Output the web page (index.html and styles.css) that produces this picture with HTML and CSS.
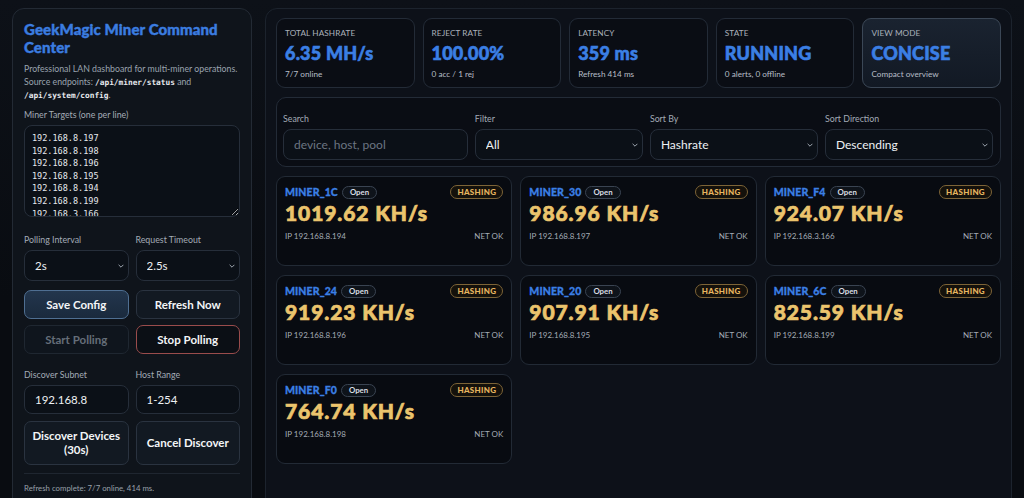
FILE: index.html
```html
<!DOCTYPE html>
<html>
<head>
	<meta charset="utf-8">
	<title>GeekMagic Miner Command Center</title>
	<link rel="stylesheet" href="styles.css">
</head>
<body>
<div class="app">
	<!--控制面板-->
	<aside class="side">
		<h1 class="title">GeekMagic Miner Command Center</h1>
		<p class="desc">Professional LAN dashboard for multi-miner operations. Source endpoints: <code>/api/miner/status</code> and <code>/api/system/config</code>.</p>

		<label class="lbl first">Miner Targets (one per line)</label>
		<textarea class="targets" spellcheck="false">192.168.8.197
192.168.8.198
192.168.8.196
192.168.8.195
192.168.8.194
192.168.8.199
192.168.3.166</textarea>

		<div class="pair gap-top">
			<div class="field">
				<label class="lbl">Polling Interval</label>
				<div class="sel">
					<select><option>2s</option></select>
					<svg class="chev" viewBox="0 0 10 6"><path d="M1 1l4 4 4-4"/></svg>
				</div>
			</div>
			<div class="field">
				<label class="lbl">Request Timeout</label>
				<div class="sel">
					<select><option>2.5s</option></select>
					<svg class="chev" viewBox="0 0 10 6"><path d="M1 1l4 4 4-4"/></svg>
				</div>
			</div>
		</div>

		<div class="pair btns">
			<button class="btn primary">Save Config</button>
			<button class="btn">Refresh Now</button>
		</div>
		<div class="pair btns tight">
			<button class="btn disabled">Start Polling</button>
			<button class="btn danger">Stop Polling</button>
		</div>

		<div class="pair gap-top2">
			<div class="field">
				<label class="lbl">Discover Subnet</label>
				<input class="inp" value="192.168.8">
			</div>
			<div class="field">
				<label class="lbl">Host Range</label>
				<input class="inp" value="1-254">
			</div>
		</div>

		<div class="pair btns tall">
			<button class="btn">Discover Devices (30s)</button>
			<button class="btn">Cancel Discover</button>
		</div>

		<div class="status">Refresh complete: 7/7 online, 414 ms.</div>
	</aside>

	<!--主面板-->
	<main class="main">
		<div class="stats">
			<div class="stat">
				<div class="stat-lbl">TOTAL HASHRATE</div>
				<div class="stat-val">6.35 MH/s</div>
				<div class="stat-sub">7/7 online</div>
			</div>
			<div class="stat">
				<div class="stat-lbl">REJECT RATE</div>
				<div class="stat-val">100.00%</div>
				<div class="stat-sub">0 acc / 1 rej</div>
			</div>
			<div class="stat">
				<div class="stat-lbl">LATENCY</div>
				<div class="stat-val">359 ms</div>
				<div class="stat-sub">Refresh 414 ms</div>
			</div>
			<div class="stat">
				<div class="stat-lbl">STATE</div>
				<div class="stat-val">RUNNING</div>
				<div class="stat-sub">0 alerts, 0 offline</div>
			</div>
			<div class="stat active">
				<div class="stat-lbl">VIEW MODE</div>
				<div class="stat-val">CONCISE</div>
				<div class="stat-sub">Compact overview</div>
			</div>
		</div>

		<div class="filters">
			<div class="field">
				<label class="lbl">Search</label>
				<input class="inp big" placeholder="device, host, pool">
			</div>
			<div class="field">
				<label class="lbl">Filter</label>
				<div class="sel big">
					<select><option>All</option></select>
					<svg class="chev" viewBox="0 0 10 6"><path d="M1 1l4 4 4-4"/></svg>
				</div>
			</div>
			<div class="field">
				<label class="lbl">Sort By</label>
				<div class="sel big">
					<select><option>Hashrate</option></select>
					<svg class="chev" viewBox="0 0 10 6"><path d="M1 1l4 4 4-4"/></svg>
				</div>
			</div>
			<div class="field">
				<label class="lbl">Sort Direction</label>
				<div class="sel big">
					<select><option>Descending</option></select>
					<svg class="chev" viewBox="0 0 10 6"><path d="M1 1l4 4 4-4"/></svg>
				</div>
			</div>
		</div>

		<div class="miners">
			<div class="miner">
				<div class="m-head"><span class="m-name">MINER_1C</span><span class="pill">Open</span><span class="tag">HASHING</span></div>
				<div class="m-rate">1019.62 KH/s</div>
				<div class="m-foot"><span>IP 192.168.8.194</span><span>NET OK</span></div>
			</div>
			<div class="miner">
				<div class="m-head"><span class="m-name">MINER_30</span><span class="pill">Open</span><span class="tag">HASHING</span></div>
				<div class="m-rate">986.96 KH/s</div>
				<div class="m-foot"><span>IP 192.168.8.197</span><span>NET OK</span></div>
			</div>
			<div class="miner">
				<div class="m-head"><span class="m-name">MINER_F4</span><span class="pill">Open</span><span class="tag">HASHING</span></div>
				<div class="m-rate">924.07 KH/s</div>
				<div class="m-foot"><span>IP 192.168.3.166</span><span>NET OK</span></div>
			</div>
			<div class="miner">
				<div class="m-head"><span class="m-name">MINER_24</span><span class="pill">Open</span><span class="tag">HASHING</span></div>
				<div class="m-rate">919.23 KH/s</div>
				<div class="m-foot"><span>IP 192.168.8.196</span><span>NET OK</span></div>
			</div>
			<div class="miner">
				<div class="m-head"><span class="m-name">MINER_20</span><span class="pill">Open</span><span class="tag">HASHING</span></div>
				<div class="m-rate">907.91 KH/s</div>
				<div class="m-foot"><span>IP 192.168.8.195</span><span>NET OK</span></div>
			</div>
			<div class="miner">
				<div class="m-head"><span class="m-name">MINER_6C</span><span class="pill">Open</span><span class="tag">HASHING</span></div>
				<div class="m-rate">825.59 KH/s</div>
				<div class="m-foot"><span>IP 192.168.8.199</span><span>NET OK</span></div>
			</div>
			<div class="miner">
				<div class="m-head"><span class="m-name">MINER_F0</span><span class="pill">Open</span><span class="tag">HASHING</span></div>
				<div class="m-rate">764.74 KH/s</div>
				<div class="m-foot"><span>IP 192.168.8.198</span><span>NET OK</span></div>
			</div>
		</div>
	</main>
</div>
</body>
</html>
```

FILE: styles.css
```css
*{
    margin: 0;
    padding: 0;
    box-sizing: border-box;
}

html, body{
    height: 100%;
    overflow: hidden;
}

body{
    background: #090c11;
    background-image: linear-gradient(180deg, #0d1118 0%, #090c11 60%);
    font-family: "Lato", "Noto Sans", sans-serif;
    color: #e6e9ee;
}

.app{
    display: grid;
    grid-template-columns: 240px 747px;
    gap: 13px;
    padding: 8px 12px 0;
    height: 100%;
}

/* 左侧面板 */
.side{
    background: #0f141b;
    border: 1px solid #232a34;
    border-radius: 12px;
    padding: 11px 11px 0;
    display: flex;
    flex-direction: column;
    height: 520px;
}

.title{
    font-size: 15px;
    line-height: 18px;
    font-weight: 900;
    color: #3b7de0;
    letter-spacing: 0.1px;
    -webkit-text-stroke: 0.4px #3b7de0;
}

.desc{
    margin-top: 6px;
    font-size: 8.75px;
    line-height: 13px;
    color: #9aa3ae;
}

.desc code{
    font-family: "DejaVu Sans Mono", monospace;
    font-size: 7.8px;
    line-height: 10px;
    font-weight: bold;
    color: #e8ebef;
}

.lbl{
    display: block;
    font-size: 8.8px;
    line-height: 11px;
    color: #a3abb6;
    margin-bottom: 5px;
}

.lbl.first{
    margin-top: 8px;
}

.targets{
    width: 100%;
    height: 92px;
    background: #0b1017;
    border: 1px solid #262e3a;
    border-radius: 8px;
    color: #e6e9ee;
    font-family: "DejaVu Sans Mono", monospace;
    font-size: 8.5px;
    line-height: 12.6px;
    padding: 6px 7px;
    resize: vertical;
    overflow: hidden;
    outline: none;
}

.pair{
    display: grid;
    grid-template-columns: 1fr 1fr;
    gap: 7px;
}

.gap-top{
    margin-top: 17px;
}

.gap-top2{
    margin-top: 15px;
}

.field{
    display: flex;
    flex-direction: column;
    min-width: 0;
}

.sel{
    position: relative;
}

.sel select, .inp{
    width: 100%;
    height: 31px;
    background: #0b1017;
    border: 1px solid #262e3a;
    border-radius: 8px;
    color: #eef1f4;
    font-family: "Lato", "Noto Sans", sans-serif;
    font-size: 11.5px;
    padding: 0 10px;
    appearance: none;
    -webkit-appearance: none;
    outline: none;
}

.inp{
    height: 29px;
}

.inp::placeholder{
    color: #6c7582;
}

.chev{
    position: absolute;
    right: 5px;
    top: 14px;
    width: 6px;
    height: 4px;
    fill: none;
    stroke: #aeb5bf;
    stroke-width: 1.5;
    pointer-events: none;
}

/* 按钮 */
.btns{
    margin-top: 9px;
}

.btns.tight{
    margin-top: 6px;
}

.btns.tall{
    margin-top: 7px;
}

.btn{
    height: 29px;
    background: #121922;
    border: 1px solid #2a3340;
    border-radius: 7px;
    color: #f3f5f7;
    font-family: "Lato", "Noto Sans", sans-serif;
    font-weight: bold;
    font-size: 11.5px;
    line-height: 14px;
    cursor: pointer;
}

.btns.tall .btn{
    height: 44px;
    padding: 0 2px;
}

.btn.primary{
    background: linear-gradient(180deg, #23364d 0%, #1a2a3d 100%);
    border-color: #4f6f92;
}

.btn.disabled{
    background: #0f151d;
    border-color: #1f2731;
    color: #656e79;
}

.btn.danger{
    background: #0b0f15;
    border-color: #9a4c4c;
}

.status{
    margin-top: 8px;
    border-top: 1px solid #1f2630;
    padding-top: 9px;
    font-size: 7.8px;
    color: #98a0aa;
}

/* 右侧主面板 */
.main{
    background: #0d1119;
    border: 1px solid #1c232d;
    border-radius: 12px;
    padding: 9px 10px 0;
    display: flex;
    flex-direction: column;
    gap: 9px;
    height: 520px;
}

.stats{
    display: grid;
    grid-template-columns: repeat(5, 1fr);
    gap: 8px;
}

.stat{
    height: 70px;
    background: #0a0d14;
    border: 1px solid #232b37;
    border-radius: 9px;
    padding: 9px 8px 0;
}

.stat.active{
    background: linear-gradient(180deg, #1a2330 0%, #121924 100%);
    border-color: #3b4756;
}

.stat-lbl{
    font-size: 8.2px;
    line-height: 10px;
    color: #aab1bb;
    letter-spacing: 0.1px;
}

.stat-val{
    margin-top: 4px;
    font-size: 18px;
    line-height: 22px;
    font-weight: 900;
    color: #3b7fe4;
    -webkit-text-stroke: 0.6px #3b7fe4;
    letter-spacing: 0.2px;
}

.stat-sub{
    margin-top: 5px;
    font-size: 8.2px;
    line-height: 10px;
    color: #b7bec7;
}

.filters{
    display: grid;
    grid-template-columns: 1.1fr 1fr 1fr 1fr;
    gap: 7px;
    height: 70px;
    background: #0a0d14;
    border: 1px solid #232b37;
    border-radius: 10px;
    padding: 15px 7px 0 6px;
}

.filters .lbl{
    margin-bottom: 5px;
}

.inp.big, .sel.big select{
    height: 31px;
    font-size: 12px;
}

.sel.big .chev{
    top: 14px;
}

/* 矿机卡片 */
.miners{
    display: grid;
    grid-template-columns: repeat(3, 1fr);
    gap: 9px 8px;
}

.miner{
    height: 90px;
    background: #080b11;
    border: 1px solid #222a35;
    border-radius: 9px;
    padding: 8px 8px 0 8px;
}

.m-head{
    display: flex;
    align-items: center;
    height: 14px;
}

.m-name{
    font-size: 10.5px;
    font-weight: 900;
    color: #3b7fe4;
    letter-spacing: 0.1px;
    -webkit-text-stroke: 0.3px #3b7fe4;
}

.pill{
    margin-left: 4px;
    height: 13px;
    line-height: 11px;
    padding: 0 7px;
    border: 1px solid #3a4452;
    border-radius: 7px;
    font-size: 7.8px;
    font-weight: bold;
    color: #d9dde2;
    background: #0e131a;
}

.tag{
    margin-left: auto;
    height: 14px;
    line-height: 12px;
    padding: 0 6px;
    border: 1px solid #7d6437;
    border-radius: 7px;
    font-size: 8px;
    font-weight: 900;
    color: #e7b660;
    background: #14110b;
    letter-spacing: 0.3px;
}

.m-rate{
    margin-top: 2px;
    font-size: 21px;
    line-height: 24px;
    font-weight: 900;
    color: #ebc46d;
    letter-spacing: 0.9px;
    -webkit-text-stroke: 0.7px #ebc46d;
}

.m-foot{
    display: flex;
    justify-content: space-between;
    margin-top: 6px;
    font-size: 8px;
    line-height: 10px;
    color: #a4acb6;
}
```
